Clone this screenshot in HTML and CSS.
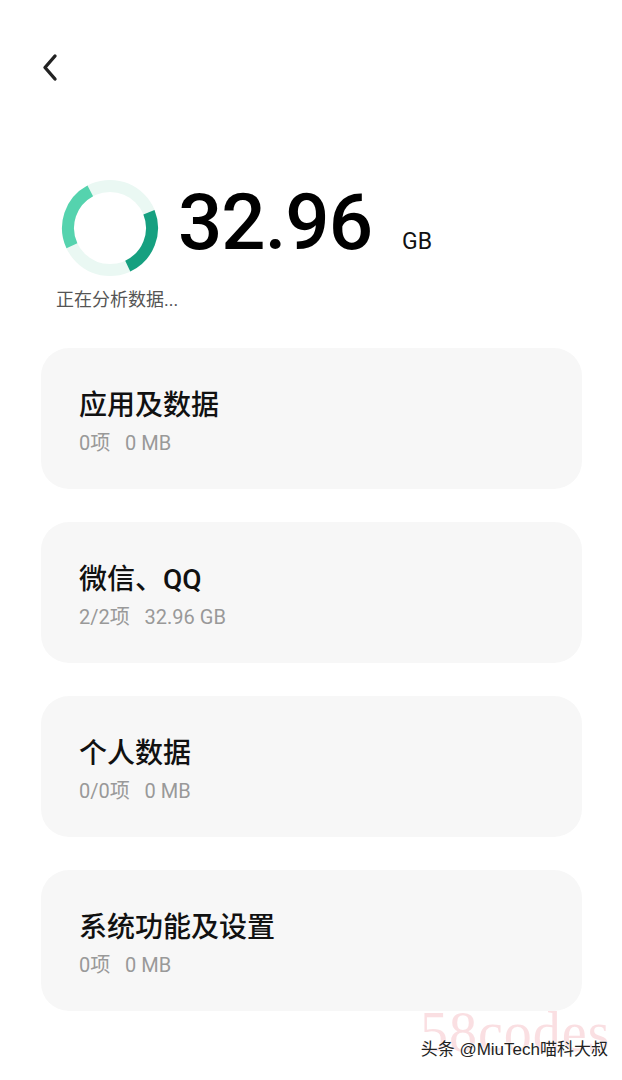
FILE: index.html
```html
<!DOCTYPE html>
<html lang="zh-CN">
<head>
  <meta charset="UTF-8">
  <meta name="viewport" content="width=device-width, initial-scale=1.0">
  <title>存储空间</title>
  <link rel="stylesheet" href="styles.css">
</head>
<body>
  <header class="top-bar">
    <button class="back-btn" aria-label="返回">
      <svg width="20" height="30" viewBox="0 0 20 30">
        <path d="M15 3 L5 14.5 L15 26" fill="none" stroke="#222" stroke-width="3.4" stroke-linecap="round" stroke-linejoin="round"/>
      </svg>
    </button>
  </header>
  <main>
    <section class="summary">
      <div class="summary-row">
        <svg class="ring" width="100" height="100" viewBox="0 0 100 100">
          <circle cx="50" cy="50" r="42" fill="none" stroke="#eaf8f3" stroke-width="12"/>
          <path d="M11.94 67.75 A42 42 0 0 1 30.28 12.92" fill="none" stroke="#55d3ae" stroke-width="12"/>
          <path d="M88.94 34.27 A42 42 0 0 1 67.75 88.07" fill="none" stroke="#16a080" stroke-width="12"/>
        </svg>
        <div class="total">
          <span class="total-num">32.96</span>
          <span class="total-unit">GB</span>
        </div>
      </div>
      <p class="status">正在分析数据...</p>
    </section>
    <section class="cards">
      <div class="card">
        <h2>应用及数据</h2>
        <p>0项&nbsp;&nbsp;&nbsp;0 MB</p>
      </div>
      <div class="card">
        <h2>微信、QQ</h2>
        <p>2/2项&nbsp;&nbsp;&nbsp;32.96 GB</p>
      </div>
      <div class="card">
        <h2>个人数据</h2>
        <p>0/0项&nbsp;&nbsp;&nbsp;0 MB</p>
      </div>
      <div class="card">
        <h2>系统功能及设置</h2>
        <p>0项&nbsp;&nbsp;&nbsp;0 MB</p>
      </div>
    </section>
  </main>
  <div class="watermark">
    <span class="wm-site">58codes</span>
    <span class="wm-text">头条 @MiuTech喵科大叔</span>
  </div>
</body>
</html>
```

FILE: styles.css
```css
body {
  margin: 0;
  padding: 0;
  background: #fff;
  font-family: Roboto, "Noto Sans CJK SC", sans-serif;
  color: #000;
  width: 622px;
  height: 1080px;
  position: relative;
  overflow: hidden;
}
.top-bar {
  height: 100px;
  padding: 53px 0 0 40px;
  box-sizing: border-box;
}
.back-btn {
  border: none;
  background: none;
  padding: 0;
  display: block;
}
.summary {
  padding: 76px 0 0 56px;
}
.summary-row {
  display: flex;
  align-items: center;
}
.ring {
  margin-left: 4px;
  margin-top: 2px;
}
.total {
  display: flex;
  align-items: baseline;
  margin-left: 18px;
  margin-top: -8px;
}
.total-num {
  font-size: 78px;
  font-weight: 500;
  letter-spacing: -1px;
  line-height: 1;
}
.total-unit {
  font-size: 23px;
  margin-left: 30px;
  color: #111;
}
.status {
  margin: 9px 0 0;
  font-size: 18px;
  color: #555;
  line-height: 26px;
}
.cards {
  margin: 35px 40px 0 41px;
  display: flex;
  flex-direction: column;
  gap: 33px;
}
.card {
  background: #f7f7f7;
  border-radius: 28px;
  height: 141px;
  box-sizing: border-box;
  padding: 40px 38px 0;
}
.card h2 {
  margin: 0;
  font-size: 28px;
  font-weight: 500;
  line-height: 36px;
  color: #111;
}
.card p {
  margin: 6px 0 0;
  font-size: 20px;
  color: #999;
  line-height: 26px;
}
.watermark {
  position: absolute;
  right: 12px;
  bottom: 6px;
  width: 200px;
  height: 60px;
}
.wm-site {
  position: absolute;
  left: 10px;
  top: -14px;
  font-family: "Liberation Serif", serif;
  font-size: 56px;
  color: rgba(240, 150, 160, 0.3);
  letter-spacing: 1px;
}
.wm-text {
  position: absolute;
  right: 2px;
  bottom: 14px;
  font-family: "Liberation Sans", "Noto Sans CJK SC", sans-serif;
  font-size: 17px;
  color: #222;
  text-shadow: 0 0 2px #fff, 0 0 2px #fff;
  white-space: nowrap;
}
```
